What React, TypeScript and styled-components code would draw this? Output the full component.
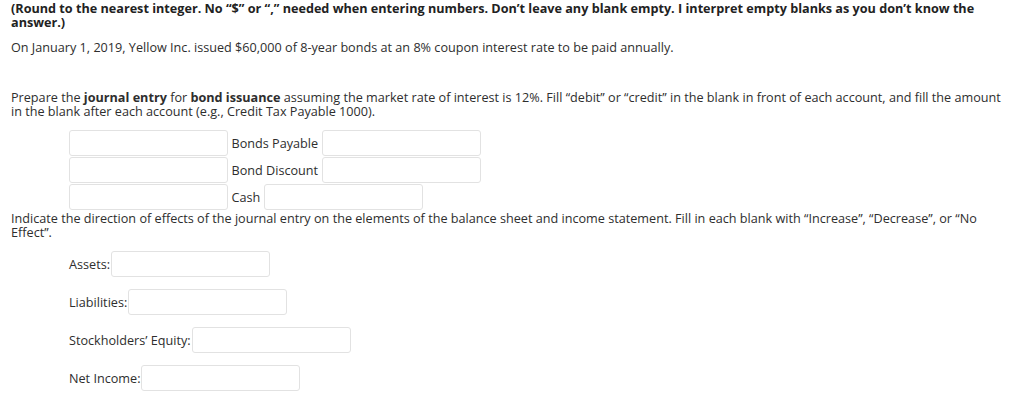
import React from "react";
import styled, { createGlobalStyle } from "styled-components";

const GlobalStyle = createGlobalStyle`
  html, body {
    margin: 0;
    padding: 0;
    background: #ffffff;
  }
  body {
    font-family: "Open Sans", "Liberation Sans", sans-serif;
    font-size: 12.65px;
    line-height: 14px;
    color: #2e2e2e;
  }
`;

const Page = styled.div`
  padding: 1px 11px 0 11px;
`;

const Paragraph = styled.p<{ $top?: number }>`
  margin: ${(p) => p.$top ?? 0}px 0 0 0;
`;

const Note = styled(Paragraph)`
  font-weight: 700;
  color: #222222;
`;

const JournalTable = styled.div`
  display: flex;
  flex-direction: column;
  gap: 1px;
  margin: 12px 0 0 58px;
`;

const JournalRow = styled.div`
  display: flex;
  align-items: center;
  gap: 3.5px;
  height: 26px;
`;

const Account = styled.span`
  white-space: nowrap;
`;

const Blank = styled.input`
  box-sizing: border-box;
  flex: none;
  width: 159px;
  height: 26px;
  margin: 0;
  padding: 0 6px;
  border: 1px solid #e2e2e2;
  border-radius: 3px;
  background: #ffffff;
  font: inherit;
  color: #333333;
  outline: none;
`;

const EffectList = styled.div`
  display: flex;
  flex-direction: column;
  gap: 12px;
  margin: 12px 0 0 58px;
`;

const EffectRow = styled.label`
  display: flex;
  align-items: center;
  gap: 1px;
  height: 26px;
`;

const journal = ["Bonds Payable", "Bond Discount", "Cash"];
const effects = ["Assets:", "Liabilities:", "Stockholders’ Equity:", "Net Income:"];

const App = () => {
  return (
    <>
      <GlobalStyle />
      <Page>
        <Note>
          (Round to the nearest integer. No “$” or “,” needed when entering
          numbers. Don’t leave any blank empty. I interpret empty blanks as you
          don’t know the answer.)
        </Note>
        <Paragraph $top={11}>
          On January 1, 2019, Yellow Inc. issued $60,000 of 8-year bonds at an
          8% coupon interest rate to be paid annually.
        </Paragraph>
        <Paragraph $top={36}>
          Prepare the <b>journal entry</b> for <b>bond issuance</b> assuming the
          market rate of interest is 12%. Fill “debit” or “credit” in the blank
          in front of each account, and fill the amount in the blank after each
          account (e.g., Credit Tax Payable 1000).
        </Paragraph>

        <JournalTable>
          {journal.map((account) => (
            <JournalRow key={account}>
              <Blank type="text" />
              <Account>{account}</Account>
              <Blank type="text" />
            </JournalRow>
          ))}
        </JournalTable>

        <Paragraph $top={1}>
          Indicate the direction of effects of the journal entry on the elements
          of the balance sheet and income statement. Fill in each blank with
          “Increase”, “Decrease”, or “No Effect”.
        </Paragraph>

        <EffectList>
          {effects.map((item) => (
            <EffectRow key={item}>
              <span>{item}</span>
              <Blank type="text" />
            </EffectRow>
          ))}
        </EffectList>
      </Page>
    </>
  );
};

export default App;
